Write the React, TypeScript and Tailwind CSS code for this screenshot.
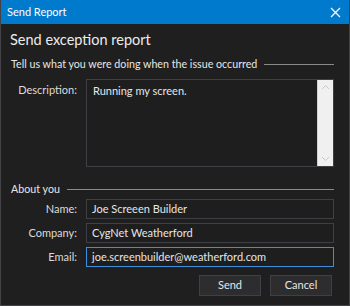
import React from "react";

const font = { fontFamily: 'Lato, "Noto Sans", sans-serif' };

function Input({ value, focused }: { value: string; focused?: boolean }) {
  return (
    <div
      className={`ml-[9px] w-[248px] h-[20px] border ${focused ? "border-[#3c8fd8]" : "border-[#3f3f46]"} bg-[#1e1e1e] flex items-center pl-[5px] text-[11px] text-[#e6e6e6] whitespace-nowrap overflow-hidden`}
    >
      {value}
    </div>
  );
}

function Row({ label, value, focused }: { label: string; value: string; focused?: boolean }) {
  return (
    <div className="flex items-center">
      <div className="w-[66px] text-right text-[11px] text-[#dcdcdc] whitespace-nowrap">{label}</div>
      <Input value={value} focused={focused} />
    </div>
  );
}

function GroupHeader({ text, className }: { text: string; className?: string }) {
  return (
    <div className={`flex items-center h-[20px] ${className ?? ""}`}>
      <span className="text-[10.7px] text-[#e6e6e6] whitespace-nowrap">{text}</span>
      <div className="flex-1 ml-[7px] h-px bg-[#8a8a8a]" />
    </div>
  );
}

export default function App() {
  return (
    <div style={font} className="w-[350px] h-[306px] bg-[#1f1f1f] border-x border-b border-[#434346] flex flex-col overflow-hidden">
      <div className="h-[24px] bg-[#007acc] flex items-center justify-between pl-[7px] pr-[8px] -mx-px">
        <span className="text-[11px] text-white">Send Report</span>
        <svg width="11" height="11" viewBox="0 0 11 11" className="mr-[1px]">
          <path d="M1 1 L10 10 M10 1 L1 10" stroke="#ffffff" strokeWidth="1.3" />
        </svg>
      </div>
      <div className="pl-[10px] pr-[15px] flex flex-col">
        <div className="-ml-px pt-[5px] leading-[22px] text-[14.5px] text-[#ececec]">Send exception report</div>
        <GroupHeader text="Tell us what you were doing when the issue occurred" className="mt-[3px]" />
        <div className="flex items-start mt-[5px]">
          <div className="w-[66px] text-right text-[11px] text-[#dcdcdc] pt-[3px]">Description:</div>
          <div className="ml-[9px] w-[248px] h-[88px] border border-[#3f3f46] bg-[#1e1e1e] flex">
            <div className="flex-1 pl-[6px] pt-[3px] text-[11px] text-[#e6e6e6]">Running my screen.</div>
            <div className="w-[16px] h-full bg-[#f0f0f0] border-l border-[#d0d0d0] flex flex-col items-center justify-between py-[4px]">
              <svg width="9" height="6" viewBox="0 0 9 6">
                <path d="M1 5 L4.5 1.5 L8 5" stroke="#c8c8c8" strokeWidth="1" fill="none" />
              </svg>
              <svg width="9" height="6" viewBox="0 0 9 6">
                <path d="M1 1 L4.5 4.5 L8 1" stroke="#c8c8c8" strokeWidth="1" fill="none" />
              </svg>
            </div>
          </div>
        </div>
        <GroupHeader text="About you" className="mt-[12px]" />
        <div className="flex flex-col gap-[4px]">
          <Row label="Name:" value="Joe Screeen Builder" />
          <Row label="Company:" value="CygNet Weatherford" />
          <Row label="Email:" value="joe.screenbuilder@weatherford.com" focused />
        </div>
        <div className="flex justify-end gap-[9px] mt-[8px] mr-[2px]">
          <button className="w-[62px] h-[21px] bg-[#2d2d30] border border-[#3f3f46] text-[11px] text-[#e6e6e6]">Send</button>
          <button className="w-[62px] h-[21px] bg-[#2d2d30] border border-[#3f3f46] text-[11px] text-[#e6e6e6]">Cancel</button>
        </div>
      </div>
    </div>
  );
}
